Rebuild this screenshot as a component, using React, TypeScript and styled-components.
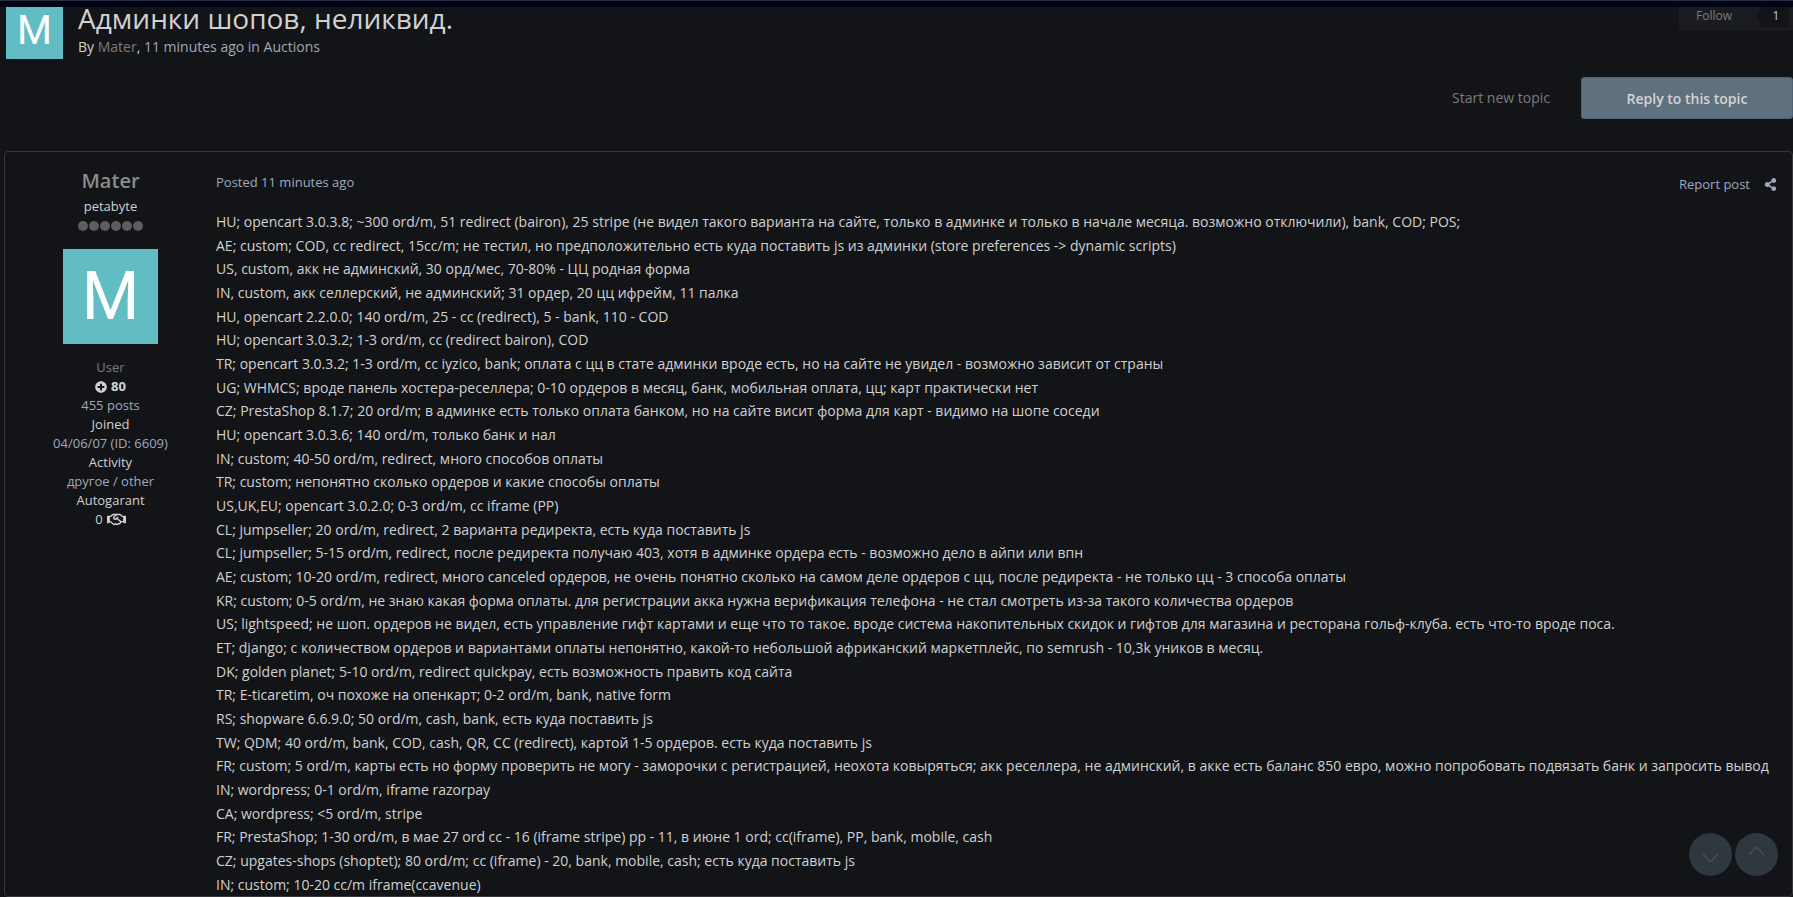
import React from "react";
import styled, { createGlobalStyle } from "styled-components";
import { FaPlusCircle, FaRegHandshake, FaShareAlt } from "react-icons/fa";

const GlobalStyle = createGlobalStyle`
  *, *::before, *::after { box-sizing: border-box; }
  body {
    margin: 0;
    background: #131417;
    color: #d0d1d3;
    font-family: "Segoe UI", "Open Sans", "Noto Sans", sans-serif;
    font-size: 14px;
    line-height: 19px;
  }
  h1, h3, p, ul { margin: 0; padding: 0; }
  a { color: inherit; text-decoration: none; }
  button { font: inherit; cursor: pointer; }
`;

const Page = styled.div`
  display: flex;
  flex-direction: column;
  min-height: 100vh;
`;

const TopBar = styled.div`
  flex: none;
  height: 7px;
  background: #000414;
  border-top: 1px solid #2b2e42;
`;

const TopicHeader = styled.header`
  display: flex;
  align-items: flex-start;
  padding-left: 6px;
`;

const Avatar = styled.a<{ $large?: boolean }>`
  display: flex;
  align-items: center;
  justify-content: center;
  width: ${(p) => (p.$large ? 95 : 57)}px;
  height: ${(p) => (p.$large ? 95 : 52)}px;
  padding-bottom: ${(p) => (p.$large ? 0 : 4)}px;
  background: #62bcc4;
  color: #fff;
  font-family: Roboto, sans-serif;
  font-size: ${(p) => (p.$large ? 66 : 40)}px;
  line-height: 1;
`;

const TopicInfo = styled.div`
  flex: 1;
  padding-left: 15px;
`;

const Title = styled.h1`
  font-size: 28px;
  font-weight: 400;
  line-height: 32px;
  margin-top: -5px;
`;

const Byline = styled.p`
  font-size: 14px;
  line-height: 20px;
  margin-top: 3px;
  color: #9fa9bd;
`;

const Strong = styled.span`
  color: #d0d1d3;
`;

const MutedLink = styled.a`
  color: #7b7b7d;
`;

const Follow = styled.div`
  display: flex;
  justify-content: space-between;
  align-items: flex-start;
  width: 114px;
  height: 24px;
  padding: 0 4px 0 17px;
  background: #1b1c20;
  border-radius: 0 0 0 3px;
`;

const FollowButton = styled.button`
  padding: 0;
  border: 0;
  background: none;
  color: #7b7b7d;
  font-size: 12px;
  line-height: 17px;
`;

const FollowCount = styled.a`
  width: 32px;
  height: 21px;
  padding-left: 6px;
  border-radius: 0 0 4px 4px;
  background: #131417;
  clip-path: polygon(5px 0, 100% 0, 100% 100%, 5px 100%, 0 45%);
  color: #b4cfe8;
  font-size: 12px;
  line-height: 17px;
  text-align: center;
`;

const Actions = styled.div`
  display: flex;
  justify-content: flex-end;
  align-items: center;
  gap: 31px;
  margin-top: 18px;
`;

const StartLink = styled.a`
  color: #7b7b7d;
  line-height: 20px;
`;

const ReplyButton = styled.button`
  width: 212px;
  height: 42px;
  border: 1px solid #4c6272;
  border-radius: 3px;
  background: #5f707e;
  color: #d3d4d6;
  font-weight: 600;
`;

const Post = styled.article`
  flex: 1;
  display: flex;
  margin: 32px 0 0 4px;
  border: 1px solid #35373a;
  border-radius: 4px;
`;

const Author = styled.aside`
  flex: none;
  display: flex;
  flex-direction: column;
  align-items: center;
  width: 211px;
  padding-top: 15px;
  font-size: 13px;
`;

const AuthorName = styled.h3`
  color: #8b8b8d;
  font-size: 20px;
  font-weight: 600;
  line-height: 27px;
`;

const Rank = styled.p`
  margin-top: 3px;
`;

const Pips = styled.div`
  display: flex;
  gap: 1px;
  margin: 5px 0 18px;
`;

const Pip = styled.span`
  width: 10px;
  height: 10px;
  border-radius: 50%;
  background: #5d5d5e;
`;

const Facts = styled.ul`
  margin-top: 14px;
  list-style: none;
  text-align: center;
`;

const Fact = styled.li<{ $tone?: "muted" | "link"; $bold?: boolean }>`
  display: flex;
  justify-content: center;
  align-items: center;
  gap: 4px;
  font-weight: ${(p) => (p.$bold ? 700 : 400)};
  color: ${(p) =>
    p.$tone === "muted" ? "#7b7b7d" : p.$tone === "link" ? "#9fa9bd" : "#d0d1d3"};
`;

const PostMain = styled.div`
  flex: 1;
  min-width: 0;
  display: flex;
  flex-direction: column;
`;

const PostMeta = styled.div`
  display: flex;
  justify-content: space-between;
  padding: 21px 15px 0 0;
  color: #9fa9bd;
  font-size: 13px;
`;

const PostTools = styled.div`
  display: flex;
  align-items: center;
  gap: 14px;
  padding-top: 2px;
`;

const ShareLink = styled.a`
  display: flex;
`;

const Lines = styled.div`
  flex: 1;
  display: flex;
  flex-direction: column;
  justify-content: space-between;
  padding-top: 16px;
`;

const Line = styled.p`
  font-size: 14px;
  line-height: 23px;
`;

const ScrollControls = styled.div`
  position: fixed;
  right: 15px;
  bottom: 21px;
  display: flex;
  gap: 3px;
`;

const ScrollButton = styled.button`
  display: flex;
  align-items: center;
  justify-content: center;
  width: 43px;
  height: 43px;
  padding: 0;
  border: 0;
  border-radius: 50%;
  background: #2f373f;
  color: #5b6269;
`;

const lines: string[] = [
  "HU; opencart 3.0.3.8; ~300 ord/m, 51 redirect (bairon), 25 stripe (не видел такого варианта на сайте, только в админке и только в начале месяца. возможно отключили), bank, COD; POS;",
  "AE; custom; COD, cc redirect, 15cc/m; не тестил, но предположительно есть куда поставить js из админки (store preferences -> dynamic scripts)",
  "US, custom, акк не админский, 30 орд/мес, 70-80% - ЦЦ родная форма",
  "IN, custom, акк селлерский, не админский; 31 ордер, 20 цц ифрейм, 11 палка",
  "HU, opencart 2.2.0.0; 140 ord/m, 25 - cc (redirect), 5 - bank, 110 - COD",
  "HU; opencart 3.0.3.2; 1-3 ord/m, cc (redirect bairon), COD",
  "TR; opencart 3.0.3.2; 1-3 ord/m, cc iyzico, bank; оплата с цц в стате админки вроде есть, но на сайте не увидел - возможно зависит от страны",
  "UG; WHMCS; вроде панель хостера-реселлера; 0-10 ордеров в месяц, банк, мобильная оплата, цц; карт практически нет",
  "CZ; PrestaShop 8.1.7; 20 ord/m; в админке есть только оплата банком, но на сайте висит форма для карт - видимо на шопе соседи",
  "HU; opencart 3.0.3.6; 140 ord/m, только банк и нал",
  "IN; custom; 40-50 ord/m, redirect, много способов оплаты",
  "TR; custom; непонятно сколько ордеров и какие способы оплаты",
  "US,UK,EU; opencart 3.0.2.0; 0-3 ord/m, cc iframe (PP)",
  "CL; jumpseller; 20 ord/m, redirect, 2 варианта редиректа, есть куда поставить js",
  "CL; jumpseller; 5-15 ord/m, redirect, после редиректа получаю 403, хотя в админке ордера есть - возможно дело в айпи или впн",
  "AE; custom; 10-20 ord/m, redirect, много canceled ордеров, не очень понятно сколько на самом деле ордеров с цц, после редиректа - не только цц - 3 способа оплаты",
  "KR; custom; 0-5 ord/m, не знаю какая форма оплаты. для регистрации акка нужна верификация телефона - не стал смотреть из-за такого количества ордеров",
  "US; lightspeed; не шоп. ордеров не видел, есть управление гифт картами и еще что то такое. вроде система накопительных скидок и гифтов для магазина и ресторана гольф-клуба. есть что-то вроде поса.",
  "ET; django; с количеством ордеров и вариантами оплаты непонятно, какой-то небольшой африканский маркетплейс, по semrush - 10,3k уников в месяц.",
  "DK; golden planet; 5-10 ord/m, redirect quickpay, есть возможность править код сайта",
  "TR; E-ticaretim, оч похоже на опенкарт; 0-2 ord/m, bank, native form",
  "RS; shopware 6.6.9.0; 50 ord/m, cash, bank, есть куда поставить js",
  "TW; QDM; 40 ord/m, bank, COD, cash, QR, CC (redirect), картой 1-5 ордеров. есть куда поставить js",
  "FR; custom; 5 ord/m, карты есть но форму проверить не могу - заморочки с регистрацией, неохота ковыряться; акк реселлера, не админский, в акке есть баланс 850 евро, можно попробовать подвязать банк и запросить вывод",
  "IN; wordpress; 0-1 ord/m, iframe razorpay",
  "CA; wordpress; <5 ord/m, stripe",
  "FR; PrestaShop; 1-30 ord/m, в мае 27 ord cc - 16 (iframe stripe) pp - 11, в июне 1 ord; cc(iframe), PP, bank, mobile, cash",
  "CZ; upgates-shops (shoptet); 80 ord/m; cc (iframe) - 20, bank, mobile, cash; есть куда поставить js",
  "IN; custom; 10-20 cc/m iframe(ccavenue)",
];

function Chevron({ up }: { up?: boolean }) {
  return (
    <svg width="17" height="17" viewBox="0 0 17 17" fill="none" stroke="currentColor" aria-hidden="true">
      <path d={up ? "M1 9 L8.5 1 L16 9" : "M1 8 L8.5 16 L16 8"} />
    </svg>
  );
}

export default function App() {
  return (
    <>
      <GlobalStyle />
      <Page>
        <TopBar />
        <TopicHeader>
          <Avatar href="#mater">M</Avatar>
          <TopicInfo>
            <Title>Админки шопов, неликвид.</Title>
            <Byline>
              <Strong>By</Strong> <MutedLink href="#mater">Mater</MutedLink>
              <Strong>,</Strong> 11 minutes ago in <a href="#auctions">Auctions</a>
            </Byline>
          </TopicInfo>
          <Follow>
            <FollowButton type="button">Follow</FollowButton>
            <FollowCount href="#followers">1</FollowCount>
          </Follow>
        </TopicHeader>
        <Actions>
          <StartLink href="#new">Start new topic</StartLink>
          <ReplyButton type="button">Reply to this topic</ReplyButton>
        </Actions>
        <Post>
          <Author>
            <AuthorName>
              <a href="#mater">Mater</a>
            </AuthorName>
            <Rank>petabyte</Rank>
            <Pips>
              {Array.from({ length: 6 }, (_, i) => (
                <Pip key={i} />
              ))}
            </Pips>
            <Avatar href="#mater" $large>
              M
            </Avatar>
            <Facts>
              <Fact $tone="muted">User</Fact>
              <Fact $bold>
                <FaPlusCircle size={12} /> 80
              </Fact>
              <Fact $tone="link">455 posts</Fact>
              <Fact>Joined</Fact>
              <Fact $tone="link">04/06/07 (ID: 6609)</Fact>
              <Fact>Activity</Fact>
              <Fact $tone="link">другое / other</Fact>
              <Fact>Autogarant</Fact>
              <Fact>
                0 <FaRegHandshake size={19} />
              </Fact>
            </Facts>
          </Author>
          <PostMain>
            <PostMeta>
              <a href="#post">Posted 11 minutes ago</a>
              <PostTools>
                <a href="#report">Report post</a>
                <ShareLink href="#share" aria-label="Share">
                  <FaShareAlt size={13} />
                </ShareLink>
              </PostTools>
            </PostMeta>
            <Lines>
              {lines.map((text) => (
                <Line key={text}>{text}</Line>
              ))}
            </Lines>
          </PostMain>
        </Post>
      </Page>
      <ScrollControls>
        <ScrollButton type="button" aria-label="Scroll down">
          <Chevron />
        </ScrollButton>
        <ScrollButton type="button" aria-label="Scroll up">
          <Chevron up />
        </ScrollButton>
      </ScrollControls>
    </>
  );
}
